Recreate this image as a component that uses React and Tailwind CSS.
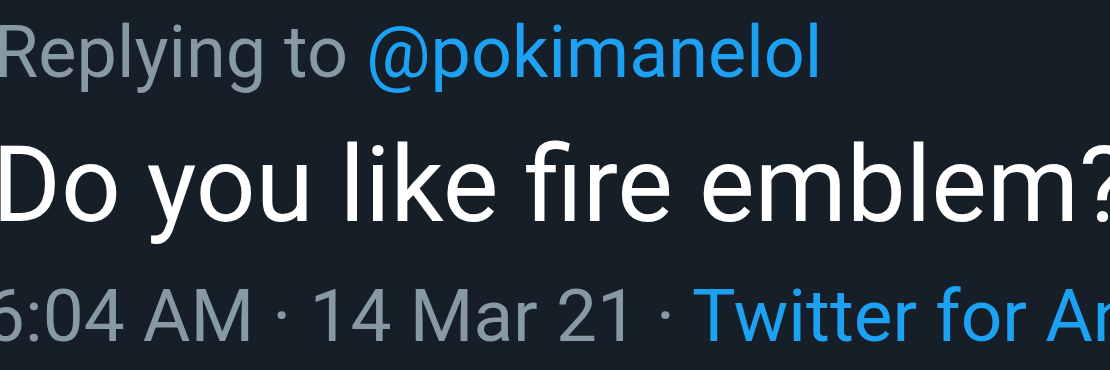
export default function App() {
  return (
    <div className="w-[1110px] h-[370px] overflow-hidden bg-[#161e27] flex flex-col whitespace-nowrap" style={{ fontFamily: "Roboto, 'Noto Sans', sans-serif" }}>
      <div className="mt-[17px] ml-[-6px] text-[72px] leading-none text-[#8899a6]">
        Replying to <span className="text-[#1da1f2]">@pokimanelol</span>
      </div>
      <div className="mt-[44px] ml-[-8px] text-[105px] leading-none text-white">
        Do you like fire emblem?
      </div>
      <div className="mt-[42px] ml-[-16px] text-[73px] leading-none text-[#8899a6]">
        6:04 AM · 14 Mar 21 · <span className="text-[#1da1f2]">Twitter for Android</span>
      </div>
    </div>
  );
}
